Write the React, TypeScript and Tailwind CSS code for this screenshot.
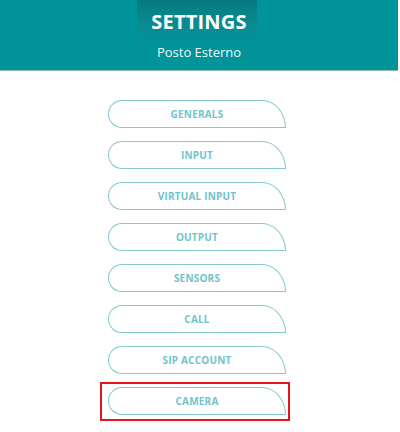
import React from 'react'

const items = ['GENERALS', 'INPUT', 'VIRTUAL INPUT', 'OUTPUT', 'SENSORS', 'CALL', 'SIP ACCOUNT', 'CAMERA']

function MenuButton({ label, selected }: { label: string; selected?: boolean }) {
  return (
    <div className="relative">
      {selected ? (
        <span className="pointer-events-none absolute -left-[8px] -top-[5px] h-[39px] w-[190px] border-2 border-[#e8141b]" />
      ) : null}
      <button
        className="flex h-[28px] w-[178px] items-center justify-center rounded-tl-[14px] rounded-bl-[14px] rounded-tr-[24px_28px] rounded-br-none border border-[#86c9cd] bg-white text-[10px] font-bold tracking-[0.02em] text-[#6fc4cb]"
      >
        {label}
      </button>
    </div>
  )
}

export default function App() {
  return (
    <div className="h-[432px] w-[400px] bg-white" style={{ fontFamily: '"Open Sans", "Noto Sans", sans-serif' }}>
      {/* header */}
      <header className="relative h-[71px] w-[398px] overflow-hidden border-b border-[#8fb3b6] bg-[#01939a]">
        <div className="absolute left-[137px] top-0 h-[46px] w-[120px] bg-gradient-to-b from-[#0b6f74]/70 via-[#167d82]/40 to-transparent" />
        <div className="relative flex flex-col items-center pt-[8px] text-white">
          <h1 className="text-[20px] leading-[28px] font-bold tracking-[0.01em]">SETTINGS</h1>
          <p className="mt-[7px] text-[13px] leading-[18px] text-[#eef8f8]">Posto Esterno</p>
        </div>
      </header>

      {/* menu */}
      <nav className="ml-[108px] mt-[29px] flex flex-col gap-[13px]">
        {items.map((it) => (
          <MenuButton key={it} label={it} selected={it === 'CAMERA'} />
        ))}
      </nav>
    </div>
  )
}
